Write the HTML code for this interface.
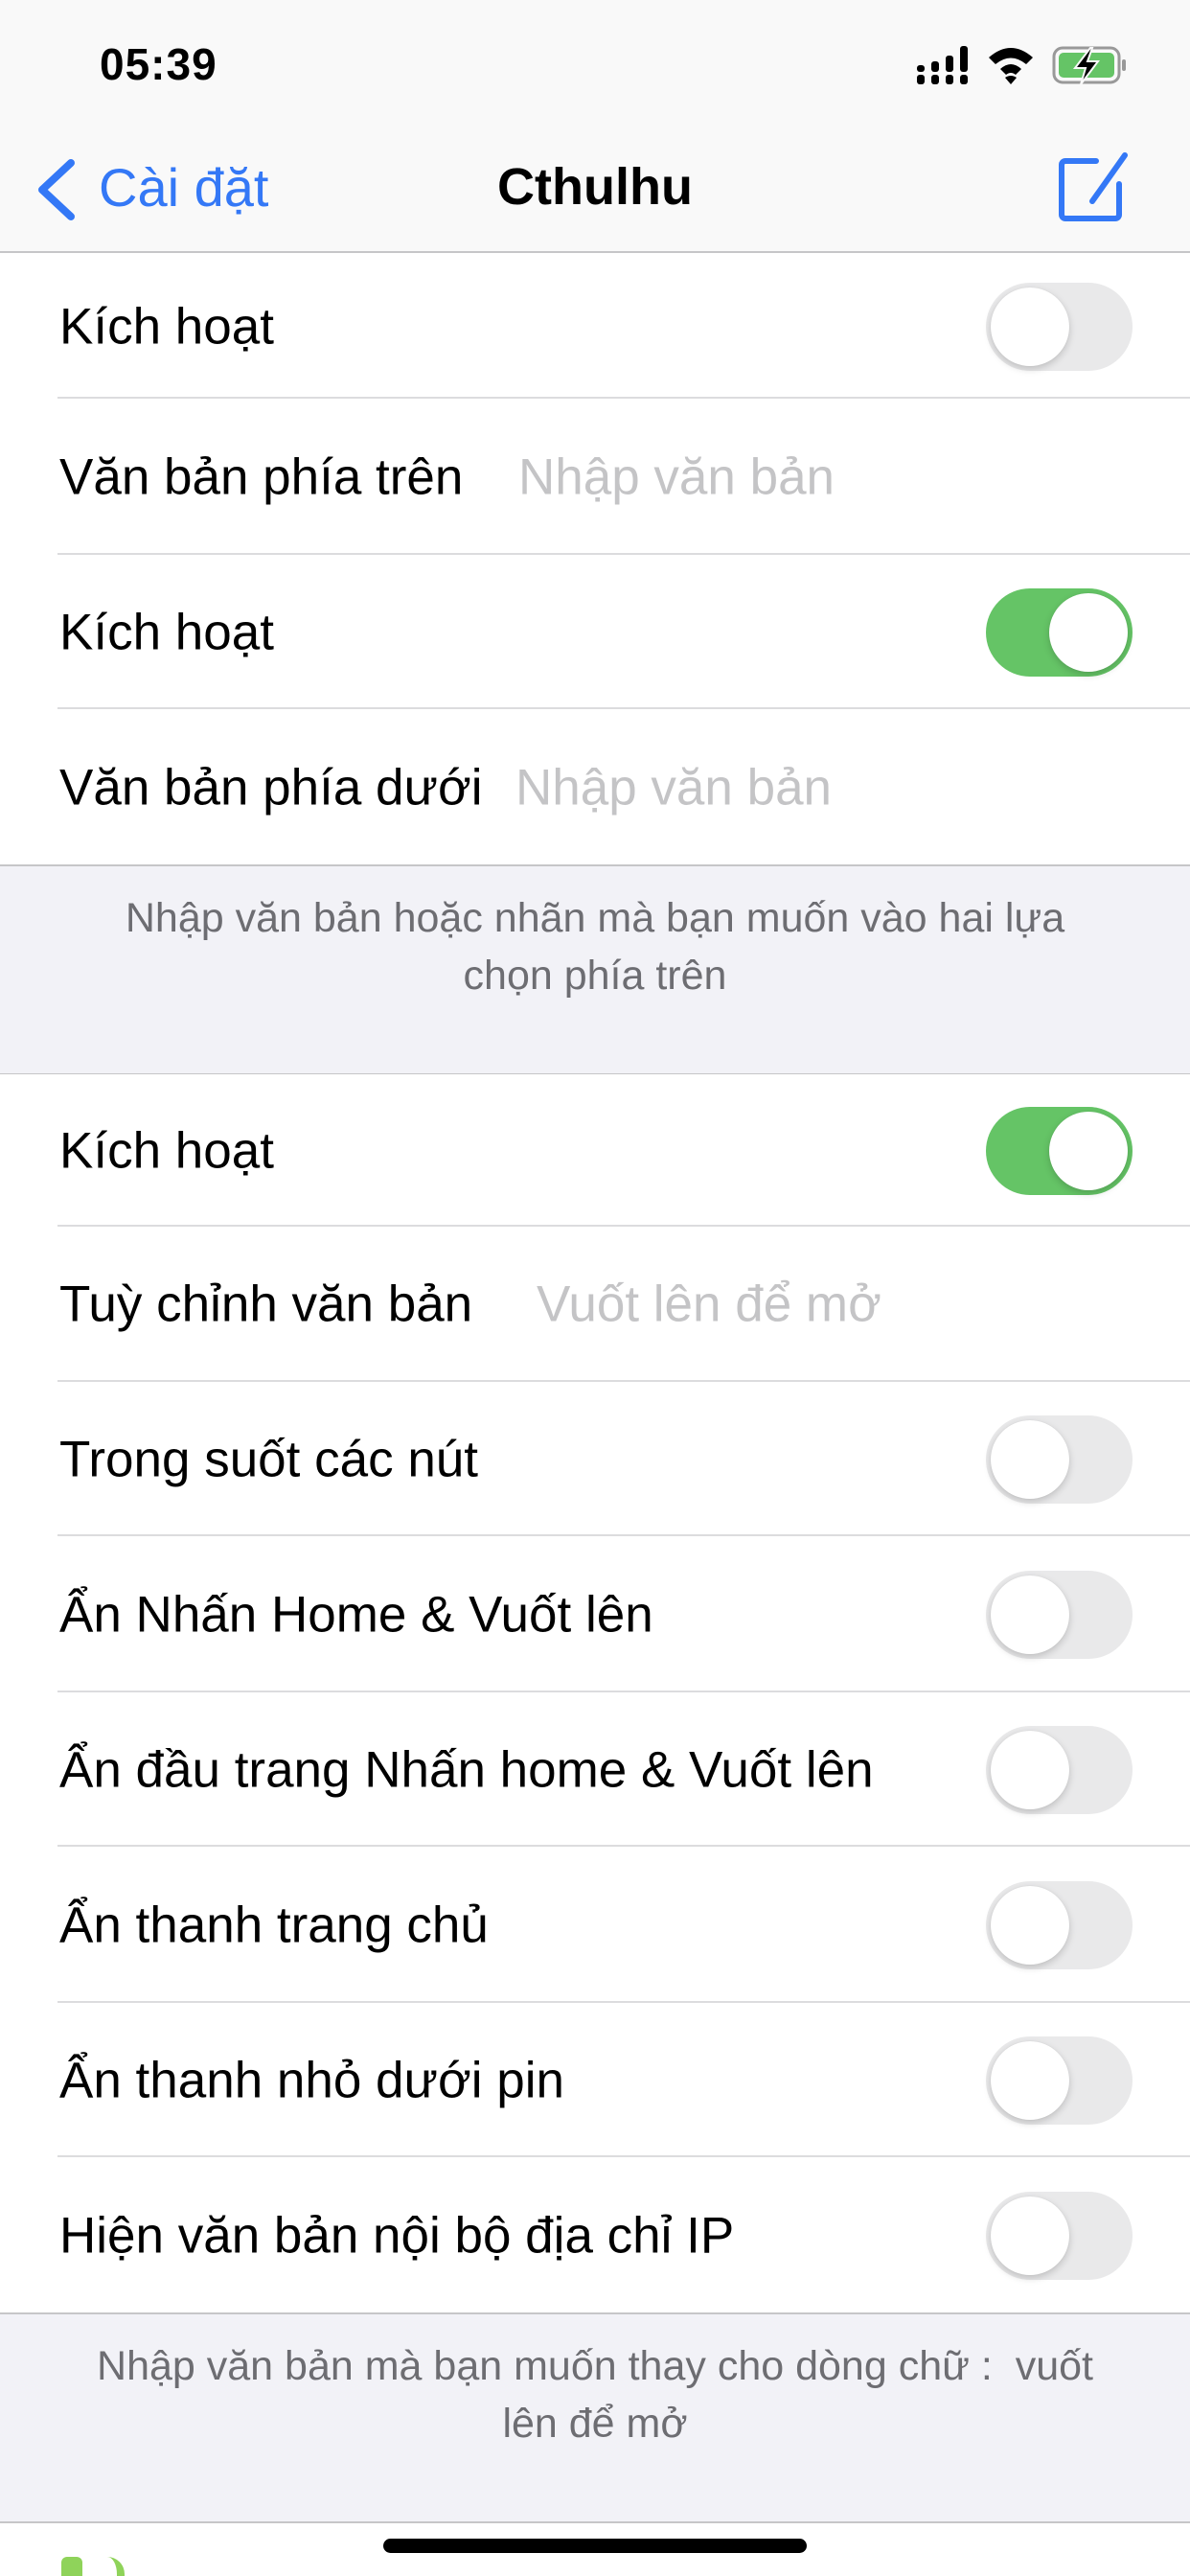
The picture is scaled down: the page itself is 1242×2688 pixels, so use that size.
<!DOCTYPE html>
<html><head><meta charset="utf-8"><style>
*{margin:0;padding:0;box-sizing:border-box}
body{width:1242px;height:2688px;background:#fff;font-family:"Liberation Sans",sans-serif;position:relative;overflow:hidden}
.abs{position:absolute}
.nav{left:0;top:0;width:1242px;height:264px;background:#f9f9f9;border-bottom:2px solid #c6c6c8}
.row{position:absolute;left:0;width:1242px;background:#fff}
.sep{position:absolute;left:60px;right:0;bottom:0;height:2px;background:#dcdcde}
.lbl{position:absolute;left:62px;top:50%;transform:translateY(-50%);font-size:53px;color:#000;white-space:nowrap}
.ph{position:absolute;top:50%;transform:translateY(-50%);font-size:53px;color:#c4c4c6;white-space:nowrap}
.tg{position:absolute;left:1029px;top:50%;margin-top:-46px;width:153px;height:92px;border-radius:46px;background:#e9e9ea}
.tg::after{content:"";position:absolute;left:5px;top:5px;width:82px;height:82px;border-radius:50%;background:#fff;box-shadow:0 3px 8px rgba(0,0,0,.18),0 0 1px rgba(0,0,0,.1)}
.tg.on{background:#65c466}
.tg.on::after{left:66px}
.foot{position:absolute;left:0;width:1242px;background:#f2f2f7;border-top:2px solid #c6c6c8;border-bottom:2px solid #c6c6c8;color:#6d6d72;font-size:43px;text-align:center;line-height:60px;white-space:nowrap}
</style></head><body>
<div class="abs nav"></div>
<div class="abs" style="left:104px;top:40px;font-size:46px;font-weight:bold;letter-spacing:1px">05:39</div>
<svg class="abs" style="left:955px;top:48px" width="60" height="40" viewBox="0 0 60 40">
<g fill="#000"><rect x="2" y="30" width="8" height="10" rx="3"/><rect x="2" y="20" width="8" height="7" rx="3"/>
<rect x="17" y="30" width="8" height="10" rx="3"/><rect x="17" y="16" width="8" height="11" rx="3"/>
<rect x="32" y="30" width="8" height="10" rx="3"/><rect x="32" y="10" width="8" height="17" rx="3"/>
<rect x="47" y="30" width="8" height="10" rx="3"/><rect x="47" y="0" width="8" height="27" rx="3"/></g></svg>
<svg class="abs" style="left:1030px;top:46px" width="50" height="42" viewBox="0 0 50 42">
<path d="M2 14 Q25 -6 48 14 L41 21 Q25 8 9 21Z M14 26 Q25 16 36 26 L30 32 Q25 28 20 32Z M25 42 L19 35 Q25 31 31 35Z" fill="#000"/></svg>
<svg class="abs" style="left:1098px;top:48px" width="80" height="40" viewBox="0 0 80 40">
<rect x="2" y="2" width="68" height="36" rx="9" fill="none" stroke="#999" stroke-width="3"/>
<rect x="7" y="7" width="58" height="26" rx="5" fill="#65c466"/>
<rect x="73" y="14" width="4" height="12" rx="2" fill="#999"/>
<path d="M40 2 L24 23 L35 23 L30 40 L48 16 L37 16 L42 2Z" fill="#000" stroke="#f9f9f9" stroke-width="2"/></svg>
<svg class="abs" style="left:36px;top:164px" width="44" height="68" viewBox="0 0 44 68"><path d="M38 6 L8 34 L38 62" fill="none" stroke="#3478f6" stroke-width="8" stroke-linecap="round" stroke-linejoin="round"/></svg>
<div class="abs" style="left:103px;top:163px;font-size:56px;color:#3478f6">Cài đặt</div>
<div class="abs" style="left:0;width:1242px;text-align:center;top:164px;font-size:54px;font-weight:bold">Cthulhu</div>
<svg class="abs" style="left:1104px;top:158px" width="76" height="74" viewBox="0 0 76 74">
<path d="M40 10 H8 a4 4 0 0 0 -4 4 V66 a4 4 0 0 0 4 4 H60 a4 4 0 0 0 4 -4 V34" fill="none" stroke="#3478f6" stroke-width="6" stroke-linecap="round"/>
<path d="M70 4 L36 52" stroke="#3478f6" stroke-width="6" stroke-linecap="round"/></svg>

<div class="row" style="top:266px;height:150px"><div class="lbl">Kích hoạt</div><div class="tg"></div><div class="sep"></div></div>
<div class="row" style="top:416px;height:163px"><div class="lbl">Văn bản phía trên</div><div class="ph" style="left:541px">Nhập văn bản</div><div class="sep"></div></div>
<div class="row" style="top:579px;height:161px"><div class="lbl">Kích hoạt</div><div class="tg on"></div><div class="sep"></div></div>
<div class="row" style="top:740px;height:163px"><div class="lbl">Văn bản phía dưới</div><div class="ph" style="left:538px">Nhập văn bản</div></div>
<div class="foot" style="top:902px;height:220px;padding-top:24px">Nhập văn bản hoặc nhãn mà bạn muốn vào hai lựa<br>chọn phía trên</div>

<div class="row" style="top:1121px;height:159px"><div class="lbl">Kích hoạt</div><div class="tg on"></div><div class="sep"></div></div>
<div class="row" style="top:1280px;height:162px"><div class="lbl">Tuỳ chỉnh văn bản</div><div class="ph" style="left:560px">Vuốt lên để mở</div><div class="sep"></div></div>
<div class="row" style="top:1442px;height:161px"><div class="lbl">Trong suốt các nút</div><div class="tg"></div><div class="sep"></div></div>
<div class="row" style="top:1603px;height:163px"><div class="lbl">Ẩn Nhấn Home &amp; Vuốt lên</div><div class="tg"></div><div class="sep"></div></div>
<div class="row" style="top:1766px;height:161px"><div class="lbl">Ẩn đầu trang Nhấn home &amp; Vuốt lên</div><div class="tg"></div><div class="sep"></div></div>
<div class="row" style="top:1927px;height:163px"><div class="lbl">Ẩn thanh trang chủ</div><div class="tg"></div><div class="sep"></div></div>
<div class="row" style="top:2090px;height:161px"><div class="lbl">Ẩn thanh nhỏ dưới pin</div><div class="tg"></div><div class="sep"></div></div>
<div class="row" style="top:2251px;height:163px"><div class="lbl">Hiện văn bản nội bộ địa chỉ IP</div><div class="tg"></div></div>
<div class="foot" style="top:2413px;height:220px;padding-top:24px">Nhập văn bản mà bạn muốn thay cho dòng chữ :&nbsp; vuốt<br>lên để mở</div>
<div class="abs" style="left:400px;top:2649px;width:442px;height:15px;border-radius:8px;background:#000"></div>
<div class="abs" style="left:64px;top:2668px;width:22px;height:20px;background:#8fd35a;border-radius:6px 6px 0 0"></div>
<div class="abs" style="left:112px;top:2668px;width:18px;height:20px;border-right:8px solid #8fd35a;border-radius:0 20px 0 0"></div>
</body></html>
